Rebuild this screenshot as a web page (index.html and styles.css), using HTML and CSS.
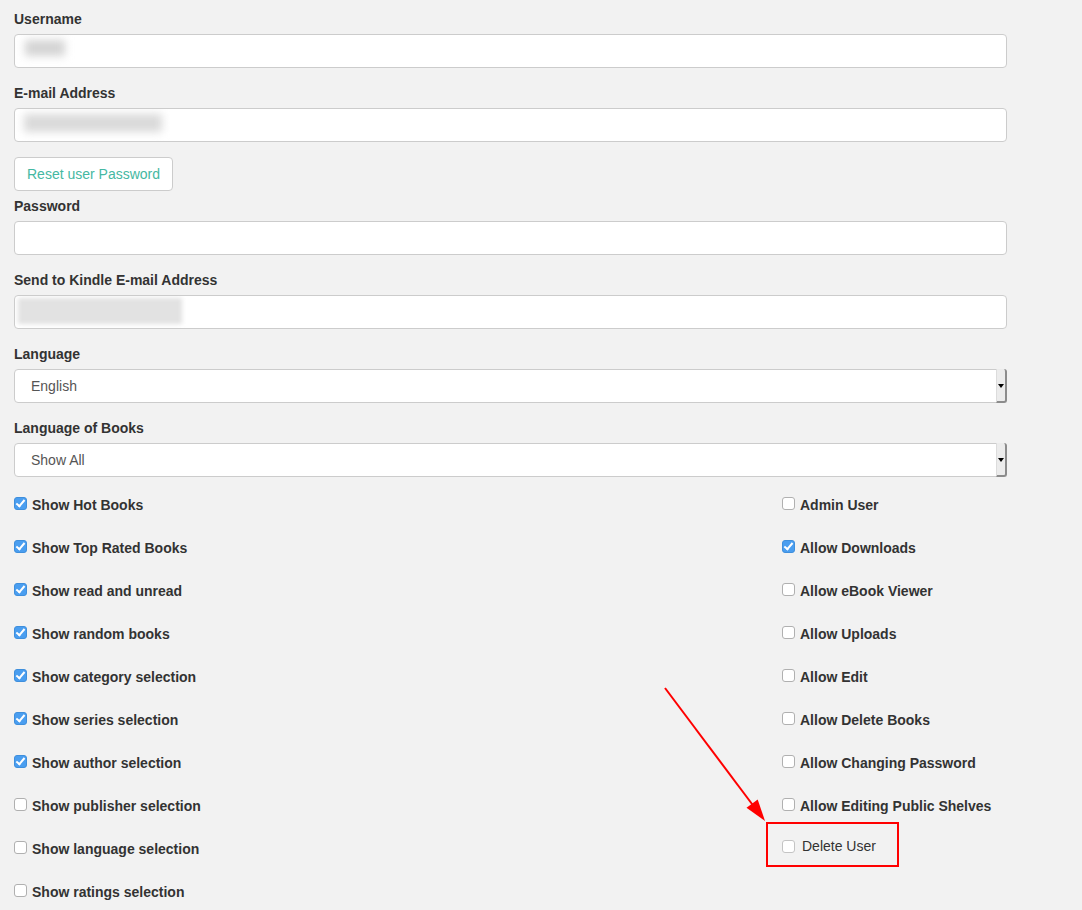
FILE: index.html
```html
<!DOCTYPE html>
<html>
<head>
<meta charset="utf-8">
<link rel="stylesheet" href="styles.css">
</head>
<body>
<div class="page">
  <form class="form">
    <div class="group">
      <label class="lbl">Username</label>
      <div class="input"><span class="blur blur-user"></span></div>
    </div>
    <div class="group">
      <label class="lbl">E-mail Address</label>
      <div class="input"><span class="blur blur-mail"></span></div>
    </div>
    <div class="btn-row"><span class="btn">Reset user Password</span></div>
    <div class="group">
      <label class="lbl">Password</label>
      <div class="input"></div>
    </div>
    <div class="group">
      <label class="lbl">Send to Kindle E-mail Address</label>
      <div class="input"><span class="blur blur-kindle"></span></div>
    </div>
    <div class="group">
      <label class="lbl">Language</label>
      <div class="select"><span class="select-text">English</span><span class="select-btn"><span class="tri"></span></span></div>
    </div>
    <div class="group">
      <label class="lbl">Language of Books</label>
      <div class="select"><span class="select-text">Show All</span><span class="select-btn"><span class="tri"></span></span></div>
    </div>

    <div class="checks">
      <div class="col">
        <div class="chk"><span class="box on"></span>Show Hot Books</div>
        <div class="chk"><span class="box on"></span>Show Top Rated Books</div>
        <div class="chk"><span class="box on"></span>Show read and unread</div>
        <div class="chk"><span class="box on"></span>Show random books</div>
        <div class="chk"><span class="box on"></span>Show category selection</div>
        <div class="chk"><span class="box on"></span>Show series selection</div>
        <div class="chk"><span class="box on"></span>Show author selection</div>
        <div class="chk"><span class="box"></span>Show publisher selection</div>
        <div class="chk"><span class="box"></span>Show language selection</div>
        <div class="chk"><span class="box"></span>Show ratings selection</div>
      </div>
      <div class="col">
        <div class="chk"><span class="box"></span>Admin User</div>
        <div class="chk"><span class="box on"></span>Allow Downloads</div>
        <div class="chk"><span class="box"></span>Allow eBook Viewer</div>
        <div class="chk"><span class="box"></span>Allow Uploads</div>
        <div class="chk"><span class="box"></span>Allow Edit</div>
        <div class="chk"><span class="box"></span>Allow Delete Books</div>
        <div class="chk"><span class="box"></span>Allow Changing Password</div>
        <div class="chk"><span class="box"></span>Allow Editing Public Shelves</div>
        <div class="chk chk-del"><span class="box"></span>Delete User</div>
      </div>
    </div>
  </form>

  <div class="annot-box"></div>
  <svg class="annot-arrow" width="1082" height="910" viewBox="0 0 1082 910">
    <line x1="665" y1="688" x2="755" y2="808" stroke="#ff0000" stroke-width="2"/>
    <polygon points="765,821 746.5,807.8 757.7,799.4" fill="#ff0000"/>
  </svg>
</div>
</body>
</html>
```

FILE: styles.css
```css
html, body {
  margin: 0;
  padding: 0;
  background: #f2f2f2;
}
.page {
  position: relative;
  width: 1082px;
  height: 910px;
  overflow: hidden;
  font-family: "Liberation Sans", Arial, sans-serif;
  font-size: 14px;
  color: #333;
}
.form {
  width: 993px;
  padding: 9px 0 0 14px;
}
.group {
  margin-bottom: 15px;
}
.lbl {
  display: block;
  font-weight: 700;
  line-height: 20px;
  margin-bottom: 5px;
}
.input {
  box-sizing: border-box;
  height: 34px;
  background: #fff;
  border: 1px solid #ccc;
  border-radius: 4px;
  position: relative;
  overflow: hidden;
}
.blur {
  display: block;
  filter: blur(4px);
  margin-top: 4px;
}
.blur-user {
  width: 40px;
  height: 16px;
  margin-left: 10px;
  margin-top: 5px;
  background: #d4d4d4;
}
.blur-mail {
  width: 138px;
  height: 18px;
  margin-left: 9px;
  margin-top: 5px;
  background: #dadada;
}
.blur-kindle {
  width: 164px;
  height: 26px;
  margin-left: 3px;
  margin-top: 2px;
  background: #e2e2e2;
  filter: blur(2px);
}
.btn-row {
  margin-bottom: 5px;
}
.btn {
  display: inline-block;
  box-sizing: border-box;
  height: 34px;
  line-height: 20px;
  padding: 6px 12px;
  background: #fff;
  border: 1px solid #ccc;
  border-radius: 4px;
  color: #45b8a2;
}
.select {
  box-sizing: border-box;
  height: 34px;
  background: #fff;
  border: 1px solid #ccc;
  border-radius: 4px;
  display: flex;
  align-items: stretch;
  justify-content: space-between;
}
.select-text {
  line-height: 32px;
  padding-left: 16px;
  color: #555;
}
.select-btn {
  box-sizing: border-box;
  width: 11px;
  margin-top: -1px;
  margin-bottom: -1px;
  margin-right: -1px;
  background: #ececec;
  border-left: 1px solid #dcdcdc;
  border-right: 2px solid #8c8c8c;
  border-bottom: 2px solid #8c8c8c;
  border-radius: 0 3px 3px 0;
  display: flex;
  align-items: center;
  justify-content: center;
}
.tri {
  width: 0;
  height: 0;
  border-left: 3px solid transparent;
  border-right: 3px solid transparent;
  border-top: 4px solid #000;
  margin-top: 1px;
}
.checks {
  margin-top: 18px;
  display: grid;
  grid-template-columns: 768px 1fr;
}
.chk {
  display: flex;
  align-items: flex-start;
  font-weight: 700;
  line-height: 20px;
  height: 20px;
  margin-bottom: 23px;
  white-space: nowrap;
}
.box {
  box-sizing: border-box;
  width: 13px;
  height: 13px;
  margin-top: 2px;
  margin-right: 5px;
  background: #fff;
  border: 1px solid #b0b0b0;
  border-radius: 3px;
  flex: none;
  position: relative;
}
.box.on {
  background: #4a9ef0;
  border-color: #3f8fdc;
}
.box.on::after {
  content: "";
  position: absolute;
  left: 3px;
  top: 0px;
  width: 3px;
  height: 7px;
  border-right: 2px solid #fff;
  border-bottom: 2px solid #fff;
  transform: rotate(40deg);
}
.chk-del {
  margin-top: -3px;
  font-weight: 400;
}
.chk-del .box {
  margin-top: 4px;
  margin-right: 7px;
  border-color: #c4c4c4;
}
.annot-box {
  position: absolute;
  left: 766px;
  top: 822px;
  width: 129px;
  height: 41px;
  border: 2px solid #ff0000;
}
.annot-arrow {
  position: absolute;
  left: 0;
  top: 0;
  pointer-events: none;
}
```
